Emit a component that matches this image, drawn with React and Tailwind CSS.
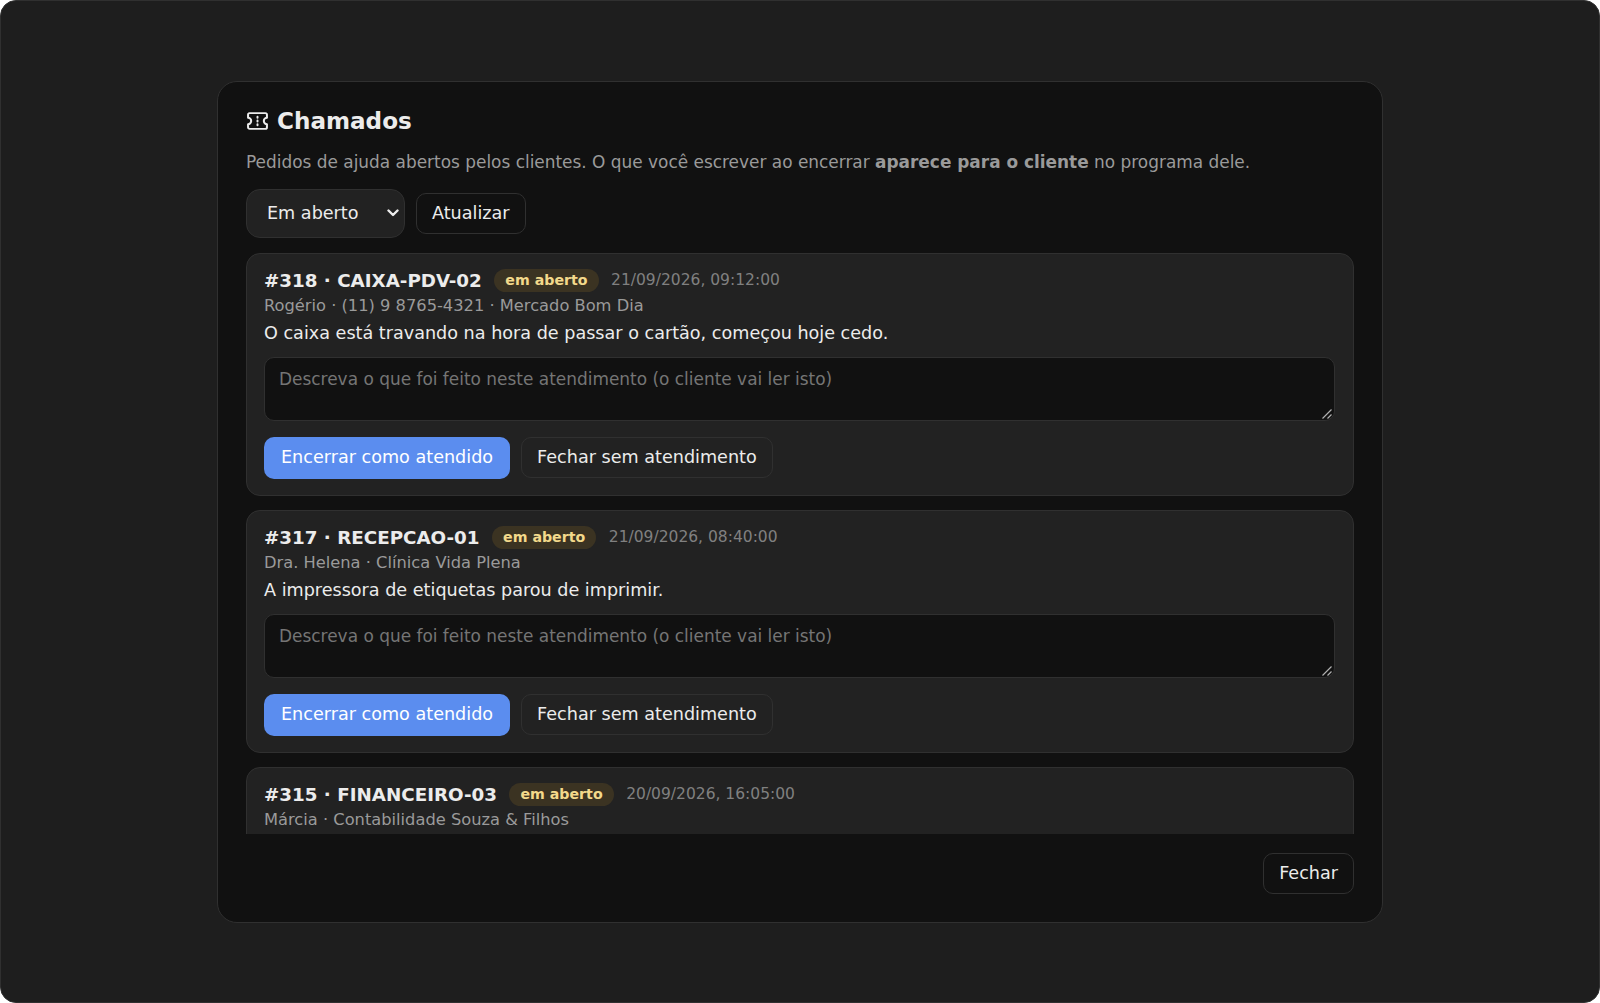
const chamados = [
  { id: 318, host: 'CAIXA-PDV-02', date: '21/09/2026, 09:12:00', who: 'Rogério · (11) 9 8765-4321 · Mercado Bom Dia', msg: 'O caixa está travando na hora de passar o cartão, começou hoje cedo.' },
  { id: 317, host: 'RECEPCAO-01', date: '21/09/2026, 08:40:00', who: 'Dra. Helena · Clínica Vida Plena', msg: 'A impressora de etiquetas parou de imprimir.' },
  { id: 315, host: 'FINANCEIRO-03', date: '20/09/2026, 16:05:00', who: 'Márcia · Contabilidade Souza & Filhos', msg: 'O sistema fica lento ao abrir os relatórios do mês.' },
];

const btn = 'h-[41px] px-[15px] rounded-[10px] border border-[#303030] bg-transparent text-[#ececec] text-[17.6px]';

const TicketIcon = () => (
  <svg className="ml-[1px] mb-[1px]" width="21" height="18" viewBox="0 0 20 17" fill="none" stroke="currentColor" strokeWidth="1.9" strokeLinecap="round" strokeLinejoin="round">
    <path d="M2.5 1H17.5a1.5 1.5 0 0 1 1.5 1.5V5.5a3 3 0 0 0 0 6V14.5a1.5 1.5 0 0 1-1.5 1.5H2.5A1.5 1.5 0 0 1 1 14.5V11.5a3 3 0 0 0 0-6V2.5A1.5 1.5 0 0 1 2.5 1Z" />
    <path d="M10 4.5v1M10 8v1M10 11.5v1" />
  </svg>
);

const Card = ({ item }) => (
  <div className="shrink-0 rounded-[14px] border border-[#303030] bg-[#222222] pl-[17px] pr-[18px] pt-[15px] pb-[16px]">
    <div className="flex items-center gap-[12.5px] h-[24px]">
      <span className="text-[18.3px] font-bold text-[#ececec]">#{item.id} · {item.host}</span>
      <span className="rounded-full bg-[#3b3322] px-[11px] py-[1px] text-[14.2px] font-bold text-[#f3d98b]">em aberto</span>
      <span className="text-[15.5px] text-[#808080]">{item.date}</span>
    </div>
    <div className="mt-[1px] text-[16.28px] leading-[24px] text-[#9a9a9a]">{item.who}</div>
    <div className="mt-[2px] text-[17.6px] leading-[26px] text-[#ececec]">{item.msg}</div>
    <div className="relative mt-[11px]">
      <textarea
        rows={2}
        placeholder="Descreva o que foi feito neste atendimento (o cliente vai ler isto)"
        className="block w-full h-[64px] resize-none rounded-[10px] border border-[#303030] bg-[#111111] px-[14px] py-[11px] text-[16.96px] leading-[20px] text-[#ececec] placeholder:text-[#757575] outline-none"
      />
      <svg className="absolute right-[3px] bottom-[2px] pointer-events-none" width="10" height="11" viewBox="0 0 10 11" fill="none" stroke="#b0b0b0" strokeWidth="1.2">
        <path d="M0.5 10.5L9.5 1.5M5.5 10.5L9.5 6.5" />
      </svg>
    </div>
    <div className="mt-[16px] flex items-center gap-[11px]">
      <button className="h-[42px] px-[17px] rounded-[10px] bg-[#5b8def] text-white text-[17.6px]">Encerrar como atendido</button>
      <button className={btn}>Fechar sem atendimento</button>
    </div>
  </div>
);

export default function App() {
  return (
    <div className="h-[1003px] w-[1600px] overflow-hidden rounded-[16px] border border-[#303030] bg-[#1e1e1e] flex items-center justify-center font-['DejaVu_Sans',sans-serif]">
      <div className="flex flex-col h-[842px] w-[1166px] rounded-[20px] border border-[#303030] bg-[#111111] px-[28px] pt-[22px] pb-[28px]">
        <div className="flex items-center gap-[9px] h-[36px] text-[#ececec]">
          <TicketIcon />
          <h1 className="text-[23.1px] font-bold">Chamados</h1>
        </div>
        <p className="mt-[10px] text-[16.93px] leading-[24px] text-[#9a9a9a]">
          Pedidos de ajuda abertos pelos clientes. O que você escrever ao encerrar <strong className="font-bold">aparece para o cliente</strong> no programa dele.
        </p>
        <div className="mt-[15px] flex items-center gap-[11px]">
          <div className="relative">
            <select className="block h-[49px] w-[159px] appearance-none rounded-[14px] border border-[#303030] bg-[#222222] pl-[20px] pr-[24px] text-[17.6px] text-[#ececec] outline-none">
              <option>Em aberto</option>
            </select>
            <svg className="absolute right-[6px] top-[20px] pointer-events-none" width="12" height="8" viewBox="0 0 12 8" fill="none" stroke="#ececec" strokeWidth="2.4" strokeLinecap="round" strokeLinejoin="round">
              <path d="M1.5 1.5L6 6L10.5 1.5" />
            </svg>
          </div>
          <button className={btn}>Atualizar</button>
        </div>
        <div className="mt-[15px] flex-1 min-h-0 overflow-y-auto flex flex-col gap-[14px] [scrollbar-width:none]">
          {chamados.map((item) => (
            <Card key={item.id} item={item} />
          ))}
        </div>
        <div className="mt-[19px] flex justify-end">
          <button className={btn}>Fechar</button>
        </div>
      </div>
    </div>
  );
}
